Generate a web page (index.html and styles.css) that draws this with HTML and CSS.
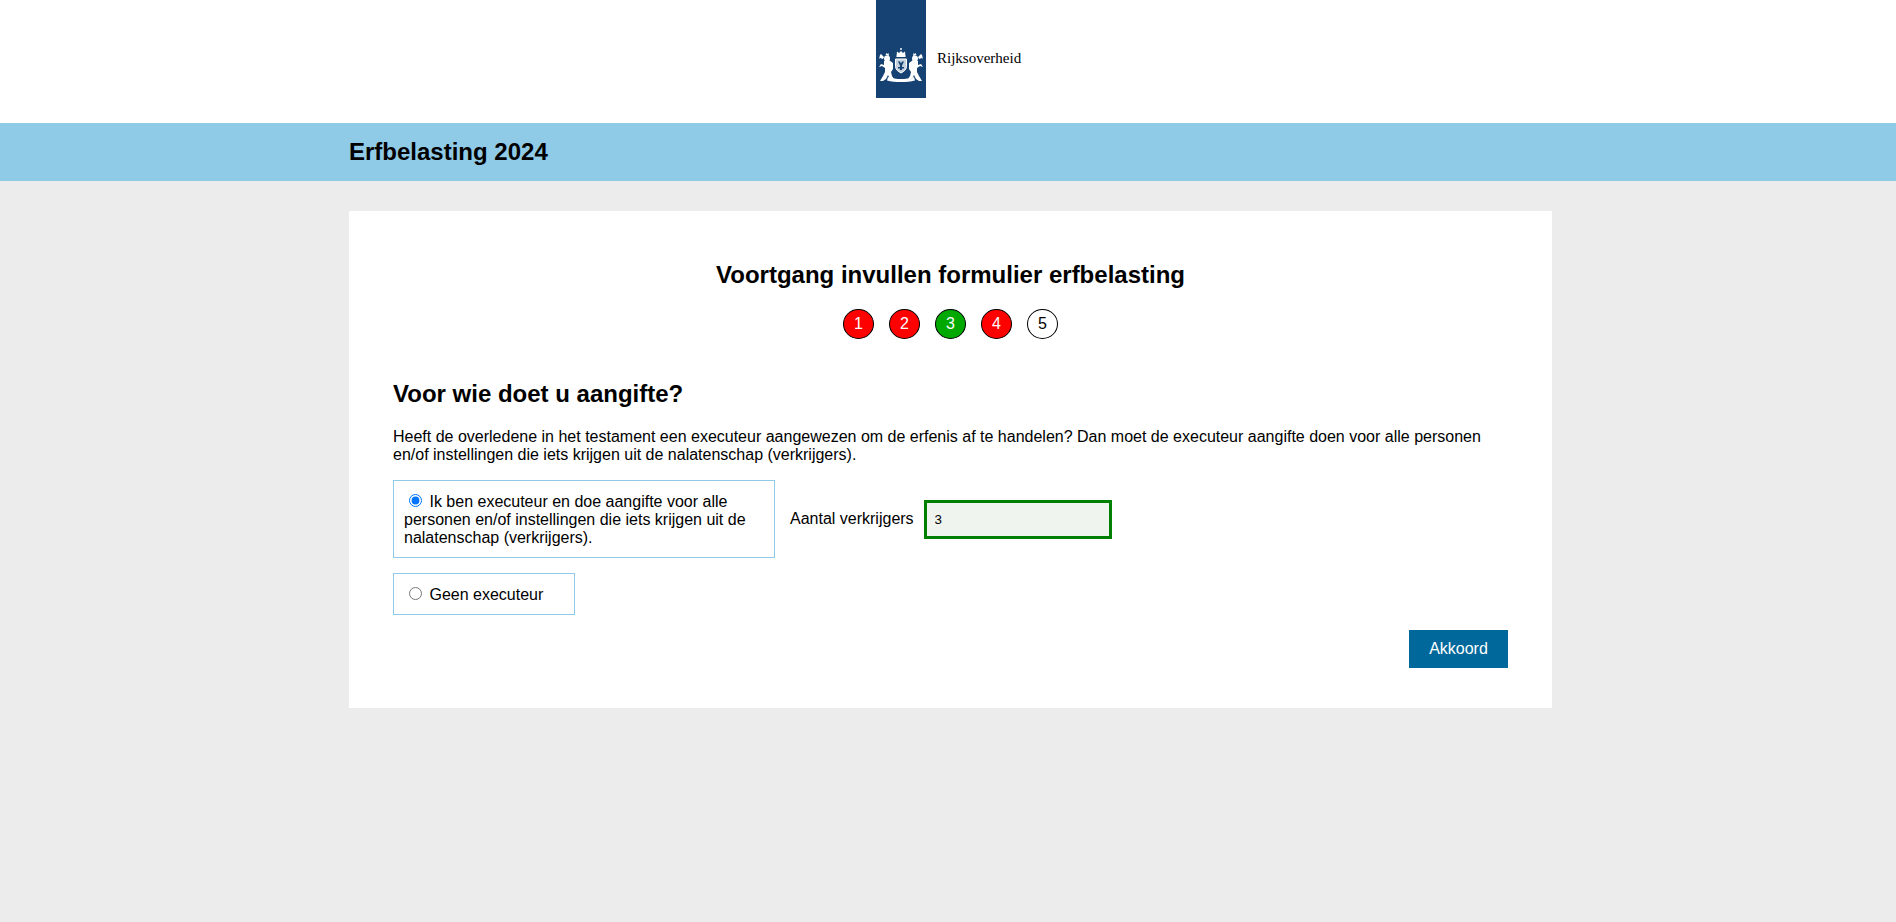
FILE: index.html
```html
<!DOCTYPE html>
<html lang="nl">
  <head>
    <meta charset="UTF-8" />
    <meta name="viewport" content="width=device-width, initial-scale=1.0" />
    <title>Erfbelasting 2024</title>
    <link rel="stylesheet" href="styles.css">
  </head>
  <body>
    <header class="top-logo">
      <div class="logo">
        <div class="logo-ribbon">
          <svg class="logo-crest" viewBox="0 0 44 36" width="44" height="36" aria-hidden="true">
            <g fill="#fff">
              <!-- kroon -->
              <path d="M21.300 0h1.400v2h-1.400zM18 3.500l2 1.500 2-2 2 2 2-1.500 .6 5.500h-9.200z"/>
              <g id="lion">
                <circle cx="8" cy="10.500" r="3"/>
                <path d="M6.500 7l1-2 1 1 1-1 .5 3z"/>
                <path d="M5 13l5-1 4 3v6l-2 3 1 4 2 3h-4l-2-4-2 4-3 2H1l3-5 2-4v-4l-3-2-3 1 2-3 3 1z"/>
                <path d="M1 7l1-1 3 3-1 2-3-1-1 1z"/>
              </g>
              <use href="#lion" transform="matrix(-1 0 0 1 44 0)"/>
              <!-- lint -->
              <path d="M9 29c4 1.500 9 2 13 2s9-.5 13-2l1 3.500c-4 1-9 1.500-14 1.500s-10-.5-14-1.500z"/>
            </g>
            <!-- schild -->
            <path d="M16.500 11h11v7.500c0 3-2.500 5-5.500 6.500-3-1.500-5.500-3.500-5.500-6.500z" fill="#c5d0dc" stroke="#fff"/>
            <path d="M19 13.500h2l1 2 1-2h2l-2 4v1.500h2v1.500h-2V22h-2v-1.500h-2V19h2v-1.500z" fill="#154273"/>
          </svg>
        </div>
        <span class="logo-name">Rijksoverheid</span>
      </div>
    </header>

    <div class="title-bar">
      <h1>Erfbelasting 2024</h1>
    </div>

    <main class="card">
      <h2 class="progress-title">Voortgang invullen formulier erfbelasting</h2>
      <ol class="steps">
        <li class="step step-red">1</li>
        <li class="step step-red">2</li>
        <li class="step step-green">3</li>
        <li class="step step-red">4</li>
        <li class="step">5</li>
      </ol>

      <h2 class="question">Voor wie doet u aangifte?</h2>
      <p class="intro">Heeft de overledene in het testament een executeur aangewezen om de erfenis af te handelen? Dan moet de executeur aangifte doen voor alle personen en/of instellingen die iets krijgen uit de nalatenschap (verkrijgers).</p>

      <form>
        <div class="choice-row">
          <label class="choice choice-wide">
            <input type="radio" name="executeur" checked />
            Ik ben executeur en doe aangifte voor alle personen en/of instellingen die iets krijgen uit de nalatenschap (verkrijgers).
          </label>
          <label class="count-label" for="aantal">Aantal verkrijgers</label>
          <input class="count-input" type="text" id="aantal" value="3" />
        </div>
        <label class="choice choice-small">
          <input type="radio" name="executeur" />
          Geen executeur
        </label>
        <div class="actions">
          <button type="button">Akkoord</button>
        </div>
      </form>
    </main>
  </body>
</html>
```

FILE: styles.css
```css
* {
  box-sizing: border-box;
}

html,
body {
  height: 100%;
}

body {
  margin: 0;
  background-color: #ececec;
  color: #000;
  font-family: "Liberation Sans", Arial, sans-serif;
  font-size: 16px;
}

.top-logo {
  height: 123px;
  background-color: #fff;
}

.logo {
  display: flex;
  align-items: flex-start;
  width: 146px;
  margin-left: 876px;
}

.logo-ribbon {
  display: flex;
  flex-direction: column;
  justify-content: flex-end;
  align-items: center;
  width: 50px;
  height: 98px;
  padding-bottom: 14px;
  background-color: #154273;
}

.logo-crest {
  display: block;
}

.logo-name {
  margin: 49px 0 0 11px;
  font-family: "Liberation Serif", serif;
  font-size: 15px;
  line-height: 18px;
}

.title-bar {
  height: 58px;
  padding-left: 349px;
  background-color: #8fcae7;
}

.title-bar h1 {
  margin: 0;
  font-size: 24px;
  line-height: 58px;
}

.card {
  width: 1203px;
  height: 497px;
  margin: 30px 0 0 349px;
  padding: 49px 44px 40px;
  background-color: #fff;
}

.progress-title {
  margin: 0;
  font-size: 24px;
  line-height: 30px;
  text-align: center;
}

.steps {
  display: flex;
  justify-content: center;
  gap: 15px;
  margin: 19px 0 0;
  padding: 0;
  list-style: none;
}

.step {
  width: 31px;
  height: 30px;
  border: 1px solid #000;
  border-radius: 50%;
  font-size: 16px;
  line-height: 28px;
  text-align: center;
}

.step-red {
  background-color: #f00;
  color: #fff;
}

.step-green {
  background-color: #00a800;
  color: #fff;
}

.question {
  margin: 40px 0 0;
  font-size: 24px;
  line-height: 30px;
}

.intro {
  margin: 19px 0 0;
  line-height: 18px;
}

.choice {
  display: block;
  padding: 12px 10px 10px;
  border: 1px solid #8fcae7;
  line-height: 18px;
}

.choice input {
  margin: 0 3px 0 5px;
}

.choice-row {
  display: flex;
  align-items: center;
  margin-top: 16px;
}

.choice-wide {
  width: 382px;
}

.choice-small {
  width: 182px;
  margin-top: 15px;
}

.count-label {
  margin-left: 15px;
}

.count-input {
  width: 188px;
  height: 39px;
  margin-left: 10px;
  padding: 0 8px;
  border: 3px solid #008000;
  background-color: #eff4ef;
  font-family: "Liberation Sans", Arial, sans-serif;
  font-size: 13.333px;
}

.actions {
  display: flex;
  justify-content: flex-end;
  margin-top: 15px;
}

.actions button {
  width: 99px;
  height: 38px;
  border: none;
  background-color: #00689b;
  color: #fff;
  font-family: "Liberation Sans", Arial, sans-serif;
  font-size: 16px;
}
```
